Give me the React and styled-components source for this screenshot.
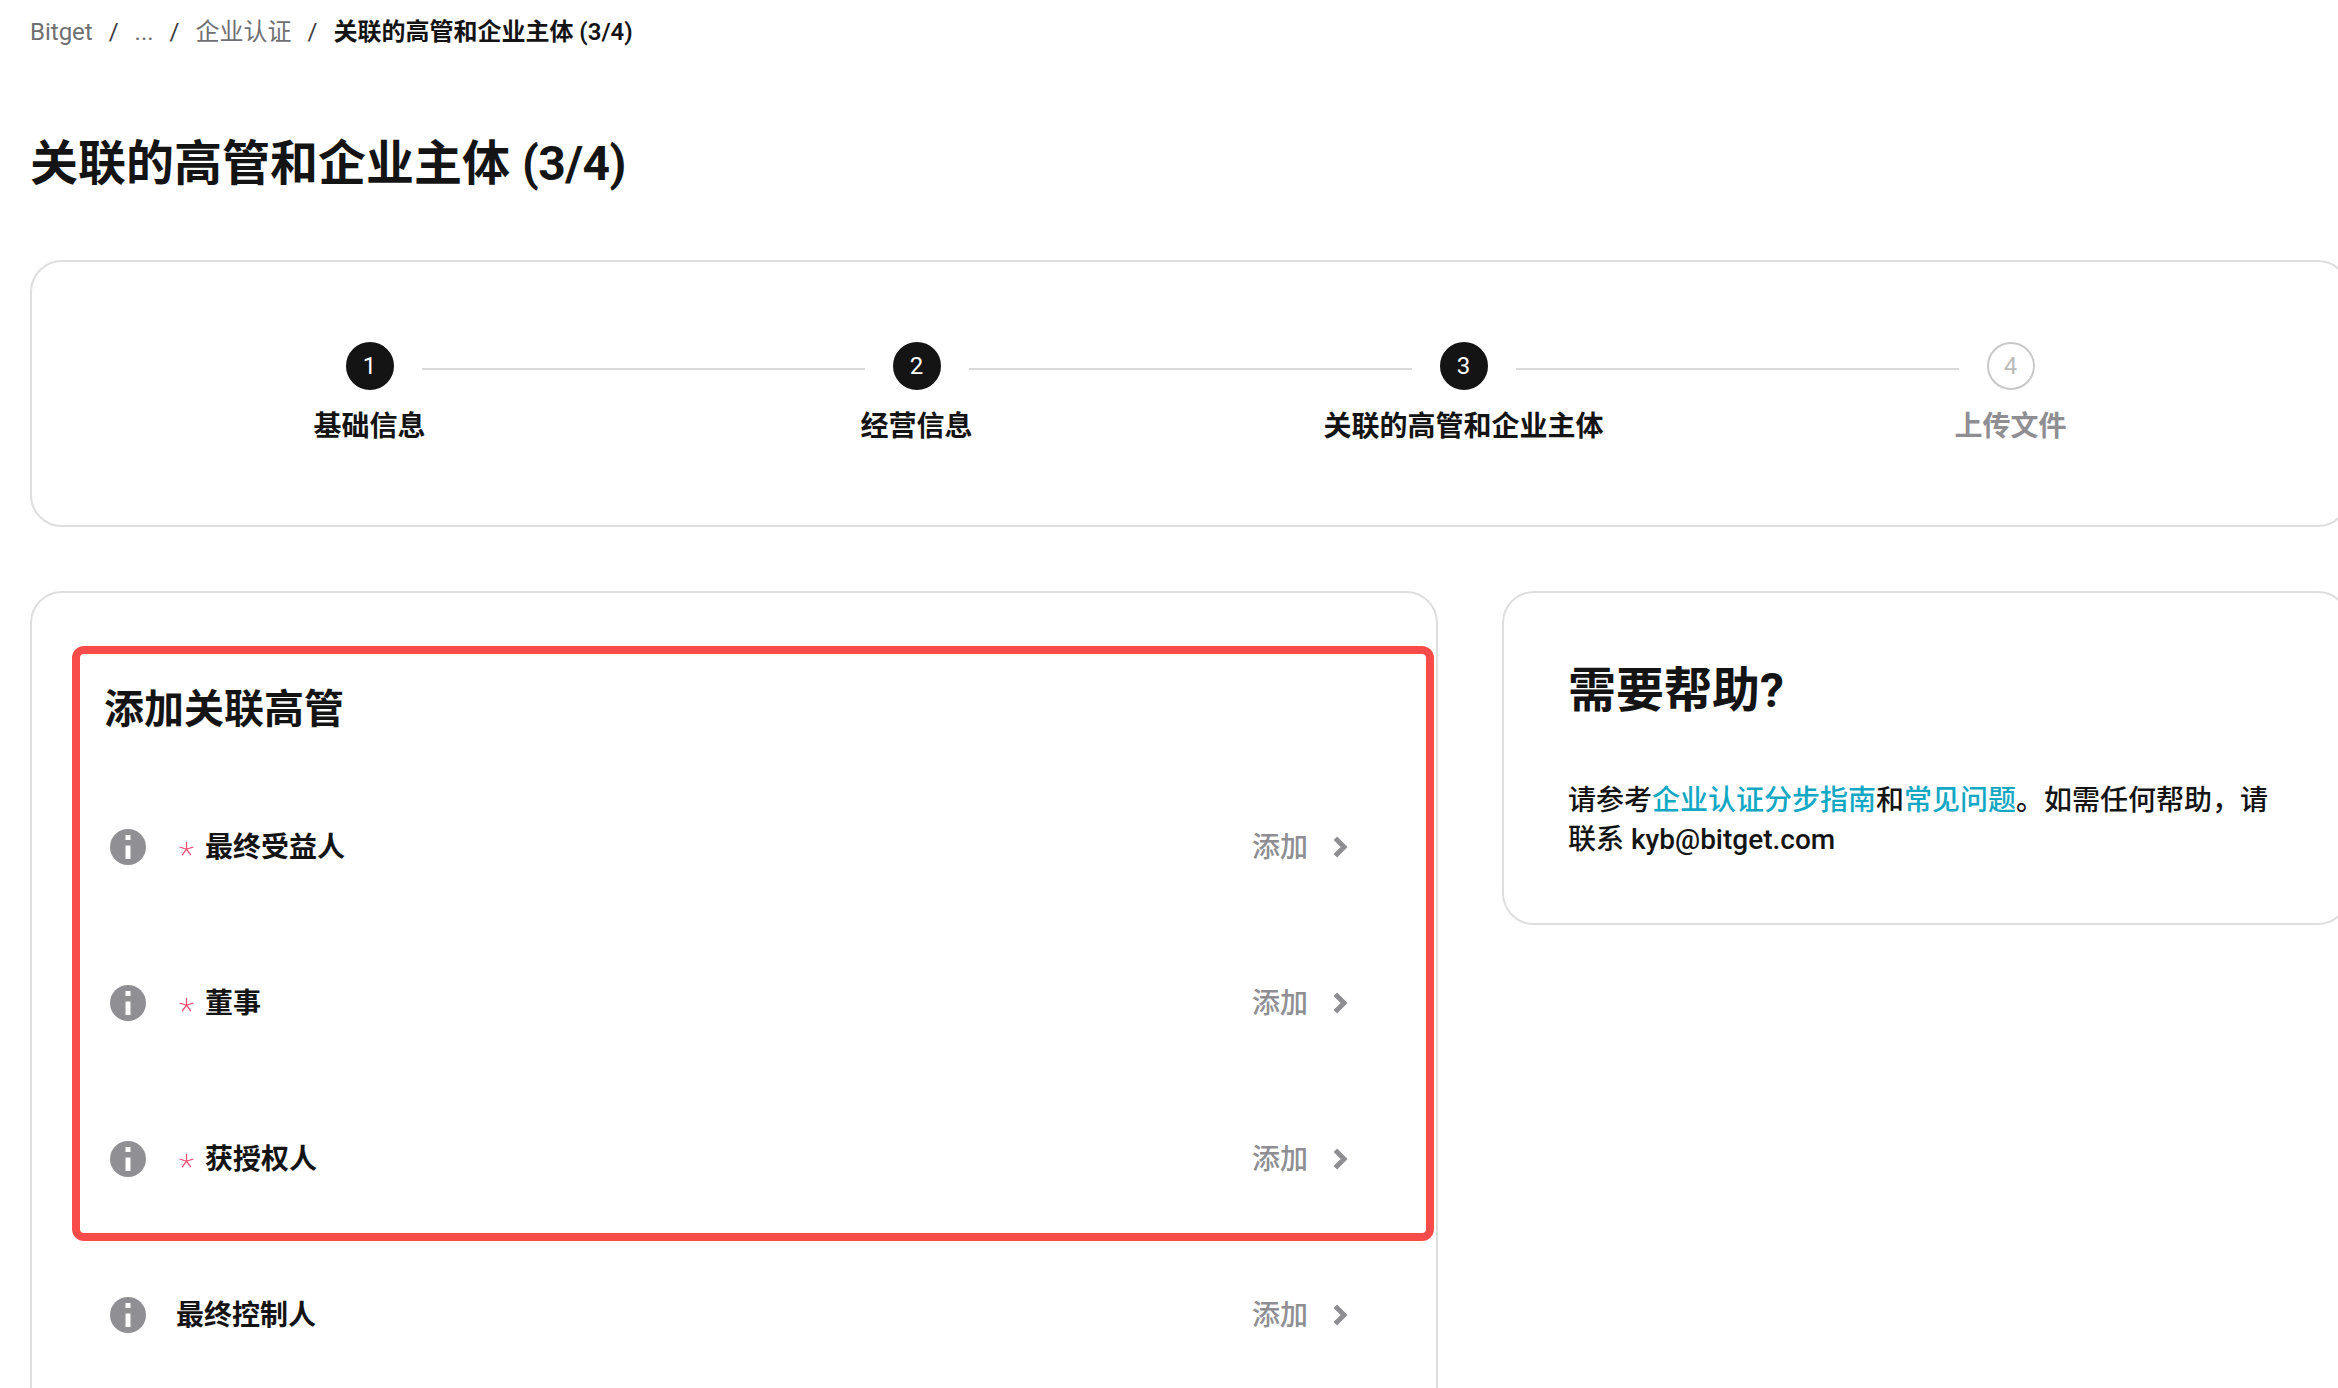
import React from "react";
import styled, { createGlobalStyle } from "styled-components";

const GlobalStyle = createGlobalStyle`
  * {
    margin: 0;
    padding: 0;
    box-sizing: border-box;
  }
  html, body {
    width: 100%;
    height: 1388px;
    overflow: hidden;
    background: #ffffff;
  }
  body {
    font-family: Roboto, "Noto Sans CJK SC", sans-serif;
    color: #141414;
  }
`;

const Page = styled.div`
  width: 2380px;
  padding: 14px 30px 0;
`;

/* Breadcrumb */
const Breadcrumb = styled.nav`
  display: flex;
  align-items: center;
  gap: 16px;
  height: 36px;
  font-size: 24px;
  line-height: 36px;
`;
const Crumb = styled.span`
  color: ${(props) => (props.$current ? "#141414" : "#6f6f73")};
  font-weight: ${(props) => (props.$current ? 600 : 400)};
`;
const Separator = styled.span`
  color: #3c3c40;
`;

const PageTitle = styled.h1`
  margin-top: 82px;
  font-size: 48px;
  line-height: 64px;
  font-weight: 700;
`;
const TitleCount = styled.span`
  letter-spacing: -0.5px;
`;

/* Cards */
const Card = styled.section`
  border: 2px solid #dedede;
  border-radius: 32px;
  background: #ffffff;
`;

/* Stepper */
const StepperCard = styled(Card)`
  display: grid;
  grid-template-columns: repeat(4, 547px);
  height: 267px;
  margin-top: 64px;
  padding: 80px 64px 0;
`;
const Step = styled.div`
  position: relative;
  display: flex;
  flex-direction: column;
  align-items: center;
  gap: 19px;

  &:not(:last-child)::after {
    content: "";
    position: absolute;
    top: 26px;
    left: calc(50% + 52px);
    width: 443px;
    height: 2px;
    background: #dadada;
  }
`;
const StepNumber = styled.div`
  display: flex;
  align-items: center;
  justify-content: center;
  width: 48px;
  height: 48px;
  border-radius: 50%;
  border: 2px solid ${(props) => (props.$pending ? "#c8c8c8" : "#141414")};
  background: ${(props) => (props.$pending ? "#ffffff" : "#141414")};
  color: ${(props) => (props.$pending ? "#bbbbbb" : "#ffffff")};
  font-size: 24px;
  font-weight: 400;
`;
const StepLabel = styled.div`
  font-size: 28px;
  line-height: 36px;
  font-weight: 600;
  color: ${(props) => (props.$pending ? "#8e8e93" : "#141414")};
`;

/* Lower section */
const Columns = styled.div`
  display: grid;
  grid-template-columns: 1408px 848px;
  gap: 64px;
  align-items: start;
  margin-top: 64px;
`;
const MainCard = styled(Card)`
  padding: 53px 2px 60px 40px;
`;
const Highlight = styled.div`
  width: 1362px;
  height: 595px;
  border: 8px solid #f74c4a;
  border-radius: 12px;
`;
const SectionTitle = styled.h2`
  margin: 28px 0 35px 24px;
  font-size: 40px;
  line-height: 56px;
  font-weight: 700;
`;
const RowList = styled.div`
  display: flex;
  flex-direction: column;
  gap: 8px;
`;
const Row = styled.div`
  display: flex;
  align-items: center;
  height: 148px;
  margin: ${(props) => (props.$outside ? "0 8px" : "0")};
  padding: 0 78px 0 30px;
`;
const RowLabel = styled.div`
  display: flex;
  align-items: center;
  flex: 1;
  margin-left: 30px;
  padding-top: 2px;
  font-size: 28px;
  line-height: 40px;
  font-weight: 600;
`;
const RequiredMark = styled.svg`
  width: 15px;
  height: 15px;
  margin: 0 11px 0 3px;
`;
const AddLink = styled.div`
  display: flex;
  align-items: center;
  gap: 25px;
  font-size: 28px;
  line-height: 40px;
  font-weight: 500;
  color: #8e8e93;
`;
const AddText = styled.span`
  padding-top: 2px;
`;

/* Help */
const HelpCard = styled(Card)`
  padding: 67px 64px 64px;
`;
const HelpTitle = styled.h2`
  font-size: 48px;
  line-height: 62px;
  font-weight: 700;
`;
const HelpText = styled.p`
  margin-top: 59px;
  font-size: 28px;
  line-height: 39px;
  font-weight: 500;
`;
const HelpLink = styled.a`
  color: #12a8c4;
  text-decoration: none;
`;

const InfoIcon = () => (
  <svg width="36" height="36" viewBox="0 0 36 36" style={{ flexShrink: 0 }}>
    <circle cx="18" cy="18" r="18" fill="#8f8f94" />
    <rect x="15.5" y="6" width="5" height="5" fill="#ffffff" />
    <rect x="15.5" y="16.5" width="5" height="13.5" fill="#ffffff" />
  </svg>
);

const Star = () => (
  <RequiredMark viewBox="0 0 15 15" fill="none" stroke="#f4476f" strokeWidth="1.2">
    <path d="M7.5 8.2V0.8M7.5 8.2L0.6 6M7.5 8.2L14.4 6M7.5 8.2L3.2 14.2M7.5 8.2L11.8 14.2" />
  </RequiredMark>
);

const Chevron = () => (
  <svg width="15" height="22" viewBox="0 0 15 22" fill="none">
    <path d="M2.4 2.2L11 11L2.4 19.8" stroke="#8e8e93" strokeWidth="5" />
  </svg>
);

const STEPS = [
  { label: "基础信息" },
  { label: "经营信息" },
  { label: "关联的高管和企业主体" },
  { label: "上传文件", pending: true },
];

const REQUIRED_ROWS = ["最终受益人", "董事", "获授权人"];

const ExecutiveRow = ({ label, required, outside }) => (
  <Row $outside={outside}>
    <InfoIcon />
    <RowLabel>
      {required && <Star />}
      {label}
    </RowLabel>
    <AddLink>
      <AddText>添加</AddText>
      <Chevron />
    </AddLink>
  </Row>
);

const App = () => (
  <>
    <GlobalStyle />
    <Page>
      <Breadcrumb>
        <Crumb>Bitget</Crumb>
        <Separator>/</Separator>
        <Crumb>...</Crumb>
        <Separator>/</Separator>
        <Crumb>企业认证</Crumb>
        <Separator>/</Separator>
        <Crumb $current>关联的高管和企业主体 (3/4)</Crumb>
      </Breadcrumb>

      <PageTitle>
        关联的高管和企业主体 <TitleCount>(3/4)</TitleCount>
      </PageTitle>

      <StepperCard>
        {STEPS.map((step, index) => (
          <Step key={step.label}>
            <StepNumber $pending={step.pending}>{index + 1}</StepNumber>
            <StepLabel $pending={step.pending}>{step.label}</StepLabel>
          </Step>
        ))}
      </StepperCard>

      <Columns>
        <MainCard>
          <Highlight>
            <SectionTitle>添加关联高管</SectionTitle>
            <RowList>
              {REQUIRED_ROWS.map((label) => (
                <ExecutiveRow key={label} label={label} required />
              ))}
            </RowList>
          </Highlight>
          <ExecutiveRow label="最终控制人" outside />
        </MainCard>

        <HelpCard>
          <HelpTitle>需要帮助?</HelpTitle>
          <HelpText>
            请参考<HelpLink href="#">企业认证分步指南</HelpLink>和
            <HelpLink href="#">常见问题</HelpLink>。如需任何帮助，请联系 kyb@bitget.com
          </HelpText>
        </HelpCard>
      </Columns>
    </Page>
  </>
);

export default App;
